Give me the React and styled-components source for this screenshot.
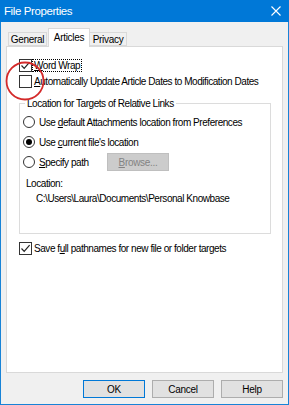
import React from "react";
import styled, { createGlobalStyle } from "styled-components";

const Global = createGlobalStyle`
  html, body { margin: 0; padding: 0; background: #ffffff; }
  * { box-sizing: border-box; }
`;

const UI_FONT = `"Liberation Sans", Arial, sans-serif`;

const Window = styled.div`
  position: relative;
  width: 289px;
  height: 405px;
  border: 1px solid #1883d7;
  border-top: none;
  background: #f0f0f0;
  display: flex;
  flex-direction: column;
  font-family: ${UI_FONT};
  font-size: 10px;
  letter-spacing: -0.45px;
  color: #000;
`;

const TitleBar = styled.div`
  height: 22px;
  margin: 0 -1px;
  background: #0078d7;
  color: #fff;
  display: flex;
  align-items: center;
  justify-content: space-between;
  padding: 0 8px 0 4px;
  font-size: 11.5px;
  letter-spacing: -0.4px;
`;

const Body = styled.div`
  flex: 1;
  display: flex;
  flex-direction: column;
  padding: 6px 5px 0 5px;
`;

const TabStrip = styled.div`
  display: flex;
  align-items: flex-end;
  height: 18px;
  padding-left: 2px;
  position: relative;
  z-index: 1;
`;

const Tab = styled.div`
  height: ${(p) => (p.$active ? "19px" : "14px")};
  width: ${(p) => p.$w}px;
  margin-left: ${(p) => p.$ml || 0}px;
  margin-bottom: ${(p) => (p.$active ? "-1px" : "0")};
  border: 1px solid #d9d9d9;
  border-bottom: ${(p) => (p.$active ? "none" : "1px solid #d9d9d9")};
  background: ${(p) => (p.$active ? "#ffffff" : "#f0f0f0")};
  display: flex;
  align-items: center;
  justify-content: center;
  padding-bottom: ${(p) => (p.$active ? "2px" : "0")};
  letter-spacing: -0.3px;
  z-index: ${(p) => (p.$active ? 2 : 1)};
`;

const Panel = styled.div`
  height: 327px;
  border: 1px solid #d9d9d9;
  background: #fff;
  padding: 10px 11px 0 12px;
  display: flex;
  flex-direction: column;
`;

const CheckRow = styled.label`
  display: flex;
  align-items: center;
  height: 16px;
  gap: 1px;
  margin-top: ${(p) => p.$mt || 0}px;
`;

const Box = styled.span`
  width: 13px;
  height: 13px;
  border: 1px solid #333;
  background: #fff;
  display: flex;
  align-items: center;
  justify-content: center;
  flex: none;
`;

const Caption = styled.span`
  padding: 0 1px;
  line-height: 11px;
  outline: ${(p) => (p.$focus ? "1px dotted #000" : "none")};
  outline-offset: 0;
  white-space: nowrap;
`;

const Group = styled.fieldset`
  margin: 8px 0 0 0;
  padding: 0 0 0 1px;
  border: 1px solid #dcdcdc;
  width: 252px;
  height: 137px;
`;

const Legend = styled.legend`
  margin-left: 4px;
  padding: 0 2px;
  line-height: 13px;
`;

const RadioList = styled.div`
  margin-top: 2px;
  display: flex;
  flex-direction: column;
`;

const RadioRow = styled.div`
  display: flex;
  align-items: center;
  height: 20px;
  padding-left: 2px;
  gap: 4px;
`;

const Radio = styled.span`
  width: 12px;
  height: 12px;
  border-radius: 50%;
  border: 1px solid #333;
  background: #fff;
  display: flex;
  align-items: center;
  justify-content: center;
  flex: none;

  &::after {
    content: "";
    width: 6px;
    height: 6px;
    border-radius: 50%;
    background: ${(p) => (p.$on ? "#000" : "transparent")};
  }
`;

const RadioText = styled.span`
  white-space: nowrap;
  width: ${(p) => (p.$w ? `${p.$w}px` : "auto")};
`;

const Button = styled.button`
  width: 62px;
  height: 18px;
  font-family: ${UI_FONT};
  font-size: 10px;
  letter-spacing: -0.3px;
  padding: 0;
  background: ${(p) => (p.disabled ? "#cccccc" : "#e1e1e1")};
  color: ${(p) => (p.disabled ? "#838383" : "#000")};
  border: 1px solid
    ${(p) => (p.$default ? "#0078d7" : p.disabled ? "#bfbfbf" : "#adadad")};
`;

const InfoLabel = styled.div`
  margin-top: 5px;
  padding-left: 5px;
  line-height: 14px;
`;

const PathText = styled.div`
  margin-top: 1px;
  padding-left: 15px;
  line-height: 14px;
  white-space: nowrap;
`;

const Footer = styled.div`
  display: flex;
  justify-content: flex-end;
  gap: 7px;
  margin-top: 7px;
`;

const Annotation = styled.svg`
  position: absolute;
  left: 0;
  top: 0;
  pointer-events: none;
`;

const U = styled.span`
  text-decoration: underline;
`;

const Check = () => (
  <svg width="11" height="11" viewBox="0 0 11 11">
    <path d="M1.5 5.5 L4.2 8.3 L9.6 2.2" fill="none" stroke="#222" strokeWidth="1.2" />
  </svg>
);

const CheckBox = ({ checked, focus, mt, children }) => (
  <CheckRow $mt={mt}>
    <Box>{checked && <Check />}</Box>
    <Caption $focus={focus}>{children}</Caption>
  </CheckRow>
);

const App = () => {
  return (
    <>
      <Global />
      <Window>
        <TitleBar>
          <span>File Properties</span>
          <svg width="10" height="10" viewBox="0 0 10 10">
            <path d="M0.5 0.5 L9.5 9.5 M9.5 0.5 L0.5 9.5" stroke="#fff" strokeWidth="1.1" />
          </svg>
        </TitleBar>
        <Body>
          <TabStrip>
            <Tab $w={39}>General</Tab>
            <Tab $w={42} $ml={1} $active>Articles</Tab>
            <Tab $w={38} $ml={-1}>Privacy</Tab>
          </TabStrip>
          <Panel>
            <CheckBox checked focus>
              <U>W</U>ord Wrap
            </CheckBox>
            <CheckBox>
              <U>A</U>utomatically Update Article Dates to Modification Dates
            </CheckBox>
            <Group>
              <Legend>Location for Targets of Relative Links</Legend>
              <RadioList>
                <RadioRow>
                  <Radio />
                  <RadioText>
                    Use <U>d</U>efault Attachments location from Preferences
                  </RadioText>
                </RadioRow>
                <RadioRow>
                  <Radio $on />
                  <RadioText>
                    Use <U>c</U>urrent file's location
                  </RadioText>
                </RadioRow>
                <RadioRow>
                  <Radio />
                  <RadioText $w={64}>
                    <U>S</U>pecify path
                  </RadioText>
                  <Button disabled>
                    <U>B</U>rowse...
                  </Button>
                </RadioRow>
              </RadioList>
              <InfoLabel>Location:</InfoLabel>
              <PathText>C:\Users\Laura\Documents\Personal Knowbase</PathText>
            </Group>
            <CheckBox checked mt={6}>
              Save f<U>u</U>ll pathnames for new file or folder targets
            </CheckBox>
          </Panel>
          <Footer>
            <Button $default>OK</Button>
            <Button>Cancel</Button>
            <Button>Help</Button>
          </Footer>
        </Body>
        <Annotation width="289" height="405">
          <circle cx="24" cy="81" r="18.5" fill="none" stroke="#d42a2a" strokeWidth="1.8" />
        </Annotation>
      </Window>
    </>
  );
};

export default App;
